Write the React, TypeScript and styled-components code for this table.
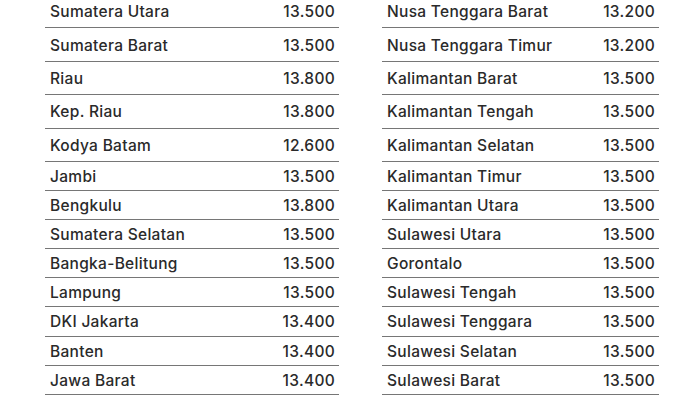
import React from 'react';
import styled, { createGlobalStyle } from 'styled-components';

type Region = {
  name: string;
  price: string;
};

const GlobalStyle = createGlobalStyle`
  html, body {
    margin: 0;
    padding: 0;
    background: #ffffff;
    overflow: hidden;
  }
  body {
    font-family: Inter, "Noto Sans", "Liberation Sans", sans-serif;
  }
`;

const Page = styled.div`
  display: flex;
  align-items: flex-start;
  gap: 43px;
  padding-left: 45px;
  margin-top: -5px;
  width: 700px;
  height: 405px;
  box-sizing: border-box;
`;

const Table = styled.div<{ $width: number }>`
  display: flex;
  flex-direction: column;
  width: ${(p) => p.$width}px;
  flex-shrink: 0;
`;

const Row = styled.div<{ $tall: boolean }>`
  display: flex;
  align-items: center;
  justify-content: space-between;
  height: ${(p) => (p.$tall ? 33.4 : 29.1)}px;
  padding: 1px 4px 0 5px;
  border-bottom: 1px solid #767676;
  box-sizing: border-box;
  color: #2a2a2a;
  font-size: 15.5px;
  font-weight: 500;
  letter-spacing: 0.3px;
`;

const Name = styled.span`
  white-space: nowrap;
`;

const Price = styled.span`
  white-space: nowrap;
  text-align: right;
`;

const left: Region[] = [
  { name: 'Sumatera Utara', price: '13.500' },
  { name: 'Sumatera Barat', price: '13.500' },
  { name: 'Riau', price: '13.800' },
  { name: 'Kep. Riau', price: '13.800' },
  { name: 'Kodya Batam', price: '12.600' },
  { name: 'Jambi', price: '13.500' },
  { name: 'Bengkulu', price: '13.800' },
  { name: 'Sumatera Selatan', price: '13.500' },
  { name: 'Bangka-Belitung', price: '13.500' },
  { name: 'Lampung', price: '13.500' },
  { name: 'DKI Jakarta', price: '13.400' },
  { name: 'Banten', price: '13.400' },
  { name: 'Jawa Barat', price: '13.400' },
];

const right: Region[] = [
  { name: 'Nusa Tenggara Barat', price: '13.200' },
  { name: 'Nusa Tenggara Timur', price: '13.200' },
  { name: 'Kalimantan Barat', price: '13.500' },
  { name: 'Kalimantan Tengah', price: '13.500' },
  { name: 'Kalimantan Selatan', price: '13.500' },
  { name: 'Kalimantan Timur', price: '13.500' },
  { name: 'Kalimantan Utara', price: '13.500' },
  { name: 'Sulawesi Utara', price: '13.500' },
  { name: 'Gorontalo', price: '13.500' },
  { name: 'Sulawesi Tengah', price: '13.500' },
  { name: 'Sulawesi Tenggara', price: '13.500' },
  { name: 'Sulawesi Selatan', price: '13.500' },
  { name: 'Sulawesi Barat', price: '13.500' },
];

function PriceTable ({ regions, width }: { regions: Region[]; width: number }): React.ReactElement {
  return (
    <Table $width={width}>
      {regions.map((region, i) => (
        <Row key={region.name} $tall={i < 5}>
          <Name>{region.name}</Name>
          <Price>{region.price}</Price>
        </Row>
      ))}
    </Table>
  );
}

export default function App (): React.ReactElement {
  return (
    <>
      <GlobalStyle />
      <Page>
        <PriceTable regions={left} width={294} />
        <PriceTable regions={right} width={277} />
      </Page>
    </>
  );
}
